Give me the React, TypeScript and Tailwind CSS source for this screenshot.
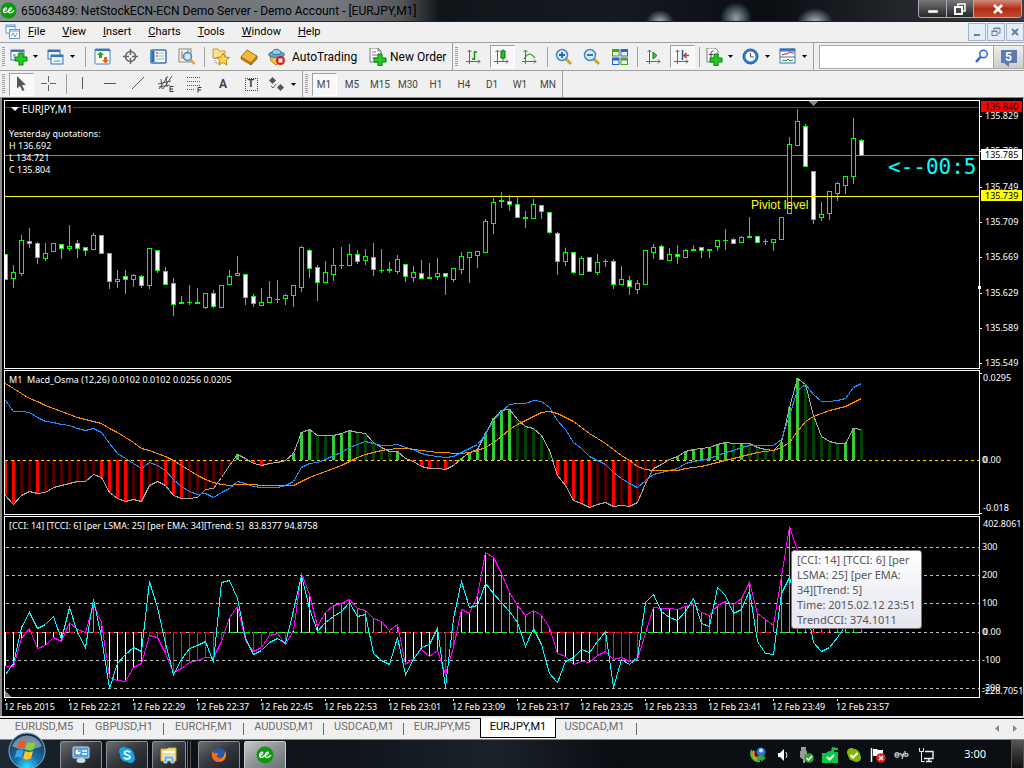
import React from 'react';
import { clsx } from 'clsx';

const STEP = 8;
const barX = (i: number) => 5 + i * STEP;

// Candles: wick top, body top, body bottom, wick bottom, 1 = bearish (filled)
const candles: number[][] = [
  [254, 254, 279, 279, 1], [265, 272, 278, 287, 0], [235, 240, 273, 275, 0], [228, 241, 243, 247, 1],
  [242, 243, 257, 263, 1], [243, 253, 258, 260, 0], [243, 243, 251, 251, 0], [244, 244, 248, 258, 1],
  [225, 246, 248, 250, 0], [240, 243, 248, 257, 1], [247, 247, 250, 255, 1], [233, 235, 249, 249, 0],
  [235, 235, 253, 253, 1], [253, 253, 281, 288, 1], [270, 279, 281, 287, 0], [270, 276, 279, 293, 1],
  [274, 275, 279, 286, 0], [275, 276, 285, 287, 1], [248, 248, 285, 288, 0], [250, 250, 270, 272, 1],
  [267, 271, 284, 284, 1], [278, 283, 304, 315, 1], [296, 302, 303, 303, 0], [285, 302, 302, 304, 0],
  [288, 302, 303, 303, 0], [293, 293, 307, 308, 0], [290, 293, 306, 307, 1], [285, 285, 307, 307, 0],
  [270, 276, 284, 284, 0], [256, 273, 275, 275, 0], [274, 274, 297, 304, 1], [294, 296, 303, 306, 1],
  [288, 302, 305, 305, 0], [281, 297, 302, 302, 0], [280, 299, 299, 302, 0], [294, 295, 298, 304, 0],
  [285, 285, 295, 306, 0], [246, 247, 287, 291, 0], [249, 250, 268, 277, 1], [265, 267, 282, 300, 1],
  [261, 272, 282, 282, 0], [248, 265, 274, 280, 0], [247, 265, 265, 268, 0], [244, 254, 265, 265, 0],
  [250, 254, 261, 263, 1], [249, 256, 260, 264, 0], [243, 257, 269, 275, 1], [249, 270, 270, 272, 0],
  [262, 269, 270, 272, 0], [255, 259, 271, 273, 0], [264, 264, 276, 281, 1], [266, 272, 277, 281, 0],
  [260, 273, 278, 278, 1], [263, 277, 278, 278, 0], [258, 273, 276, 279, 0], [273, 273, 276, 294, 1],
  [268, 268, 279, 281, 0], [252, 256, 269, 273, 0], [252, 252, 257, 282, 0], [251, 251, 255, 267, 0],
  [219, 221, 252, 252, 0], [198, 202, 223, 233, 0], [192, 200, 201, 207, 0], [195, 201, 204, 210, 1],
  [196, 204, 217, 217, 1], [211, 217, 218, 227, 0], [199, 204, 218, 218, 0], [205, 205, 211, 218, 1],
  [212, 212, 232, 233, 1], [232, 233, 261, 274, 1], [248, 252, 261, 265, 0], [252, 252, 272, 273, 1],
  [256, 258, 274, 274, 0], [257, 257, 271, 271, 1], [254, 262, 272, 274, 0], [259, 261, 261, 266, 0],
  [259, 261, 284, 288, 1], [266, 279, 284, 284, 0], [276, 280, 286, 294, 1], [280, 283, 289, 293, 0],
  [250, 250, 284, 284, 0], [244, 247, 252, 258, 0], [245, 246, 259, 259, 1], [248, 254, 260, 260, 0],
  [245, 254, 256, 263, 1], [249, 250, 257, 257, 0], [245, 249, 250, 250, 0], [247, 247, 250, 257, 1],
  [249, 249, 250, 257, 0], [240, 240, 246, 250, 0], [229, 240, 240, 249, 0], [238, 239, 243, 243, 1],
  [236, 237, 242, 242, 0], [217, 236, 237, 237, 0], [236, 236, 242, 242, 1], [239, 241, 241, 244, 0],
  [239, 239, 242, 250, 0], [217, 217, 239, 239, 0], [137, 144, 213, 213, 0], [109, 121, 145, 145, 0],
  [124, 126, 166, 166, 1], [171, 171, 219, 223, 1], [202, 214, 217, 220, 0], [191, 191, 213, 219, 0],
  [182, 183, 193, 200, 0], [176, 176, 185, 193, 0], [118, 138, 176, 183, 0], [139, 140, 155, 155, 1],
];

// Indicator samples are kept at three units per pixel, counted from y = 370
const sampleY = (v: number) => Math.round(370 + v / 3);

const osma = [
  376, 403, 375, 364, 370, 366, 352, 346, 339, 334, 334, 313, 322, 366, 384, 394, 388, 394, 344, 334,
  344, 376, 385, 385, 380, 358, 354, 322, 284, 253, 264, 280, 286, 280, 277, 270, 248, 186, 178, 196,
  196, 194, 190, 181, 186, 190, 215, 232, 243, 242, 265, 274, 289, 295, 294, 298, 286, 265, 247, 236,
  190, 145, 121, 118, 146, 169, 175, 196, 240, 315, 346, 390, 398, 412, 403, 395, 409, 406, 407, 397,
  340, 295, 283, 268, 259, 243, 238, 235, 232, 222, 217, 220, 219, 220, 230, 238, 240, 215, 111, 25,
  42, 136, 198, 213, 220, 219, 174, 178,
];

const macd = [
  90, 124, 124, 127, 142, 154, 157, 163, 166, 175, 181, 174, 186, 220, 248, 265, 278, 295, 276, 284,
  299, 327, 347, 363, 373, 370, 380, 367, 353, 333, 340, 348, 352, 352, 352, 346, 334, 292, 278, 277,
  268, 256, 247, 230, 222, 214, 218, 224, 226, 223, 232, 238, 248, 254, 258, 262, 259, 247, 234, 222,
  192, 150, 122, 103, 100, 100, 91, 92, 112, 150, 177, 215, 234, 259, 270, 282, 307, 323, 340, 352,
  331, 313, 307, 300, 294, 280, 274, 270, 264, 254, 245, 240, 231, 226, 226, 226, 226, 207, 135, 60,
  42, 72, 94, 94, 90, 84, 51, 40,
];

const signal = [
  40, 55, 70, 83, 94, 106, 115, 124, 133, 142, 148, 154, 160, 173, 187, 202, 217, 234, 241, 249,
  258, 271, 286, 301, 315, 327, 337, 343, 346, 343, 343, 343, 346, 346, 346, 346, 346, 334, 322, 312,
  303, 293, 285, 274, 262, 252, 246, 240, 237, 235, 235, 236, 239, 242, 245, 247, 250, 250, 247, 241,
  231, 216, 198, 178, 162, 150, 138, 127, 124, 130, 140, 153, 171, 188, 204, 220, 236, 254, 271, 289,
  298, 301, 301, 301, 299, 294, 292, 289, 283, 276, 271, 264, 259, 252, 247, 243, 241, 232, 215, 184,
  153, 138, 129, 120, 114, 107, 96, 84,
];

const cci = [
  887, 887, 805, 773, 835, 826, 800, 814, 756, 778, 787, 703, 757, 920, 931, 934, 890, 880, 795, 801,
  850, 907, 895, 875, 871, 862, 862, 812, 740, 709, 810, 844, 830, 795, 788, 823, 780, 610, 672, 767,
  725, 706, 700, 688, 714, 720, 745, 754, 781, 762, 882, 863, 838, 858, 840, 913, 830, 718, 728, 675,
  547, 560, 610, 665, 706, 734, 720, 735, 770, 850, 857, 883, 874, 877, 856, 844, 868, 860, 874, 868,
  790, 712, 715, 713, 716, 708, 702, 726, 734, 705, 694, 701, 684, 637, 729, 748, 765, 617, 468, 540,
  600, 700, 770, 770, 740, 700, 680, 700,
];

const tcci = [
  913, 880, 770, 727, 773, 763, 738, 808, 712, 785, 832, 688, 800, 953, 880, 853, 830, 843, 634, 710,
  820, 913, 868, 835, 825, 813, 876, 637, 631, 684, 803, 853, 841, 815, 805, 820, 720, 615, 715, 783,
  757, 737, 722, 695, 737, 733, 848, 871, 883, 800, 913, 868, 830, 822, 775, 952, 745, 634, 710, 705,
  640, 668, 695, 724, 755, 829, 775, 822, 908, 937, 874, 862, 838, 846, 812, 783, 952, 868, 883, 862,
  697, 673, 722, 740, 750, 723, 685, 758, 768, 652, 676, 728, 718, 660, 812, 850, 853, 668, 620, 700,
  700, 815, 842, 832, 800, 765, 745, 745,
];

// One letter per bar: white, lime, red, yellow
const cciBars =
  'wwwlwwwwlllllwwwwyrrrrrrrrrrwwrrrrrrwwwwylllllllllwwwwyrrwwwwylllllllwwwwyrrrrrrrwwwwyllllllllllllllllllllll';
const barColor: Record<string, string> = { w: '#fff', l: '#0f0', r: '#e02020', y: '#ffd700' };

const zeroSegments: [number, number, string][] = [
  [5, 220, '#f00'], [221, 372, '#0f0'], [373, 460, '#f00'], [461, 543, '#0f0'], [544, 640, '#f00'],
  [641, 750, '#0f0'], [757, 773, '#f00'], [781, 803, '#0f0'], [811, 829, '#f00'], [837, 862, '#0f0'],
];

const priceTicks: [string, number][] = [
  ['135.829', 116], ['135.789', 151], ['135.749', 187], ['135.709', 222],
  ['135.669', 257], ['135.629', 293], ['135.589', 328], ['135.549', 363],
];

const dates = [
  '2015', '22:21', '22:29', '22:37', '22:45', '22:53', '23:01',
  '23:09', '23:17', '23:25', '23:33', '23:41', '23:49', '23:57',
];

const points = (data: number[]) => data.map((v, i) => `${barX(i)},${sampleY(v)}`).join(' ');

const Line = ({ data, color }: { data: number[]; color: string }) => (
  <polyline points={points(data)} fill="none" stroke={color} strokeWidth={1} transform="translate(.5 .5)" />
);

/* ---------- Chart panels ---------- */

interface PanelProps {
  top: number;
  height: number;
  axis: React.ReactNode;
  header: React.ReactNode;
  children: React.ReactNode;
}

const Panel: React.FC<PanelProps> = ({ top, height, axis, header, children }) => (
  <section className="relative mb-px flex">
    <div className="min-w-0 flex-1 overflow-hidden border border-white">
      <svg
        width={974}
        height={height - 2}
        viewBox={`5 ${top + 1} 974 ${height - 2}`}
        className="block overflow-visible"
        shapeRendering="crispEdges"
      >
        {children}
      </svg>
    </div>
    <svg
      width={43}
      height={height}
      viewBox={`980 ${top} 43 ${height}`}
      className="block shrink-0 overflow-visible fill-white text-[9px]"
      shapeRendering="crispEdges"
    >
      {axis}
    </svg>
    <div className="absolute top-0 left-0 w-full pl-[5px]">{header}</div>
  </section>
);

const PriceTag = ({ y, fill, label }: { y: number; fill: string; label: string }) => (
  <>
    <rect x={981} y={y} width={41} height={11} fill={fill} />
    <text x={985} y={y + 9} fill="#000">{label}</text>
  </>
);

const PricePanel = () => (
  <Panel
    top={100}
    height={269}
    axis={
      <>
        {priceTicks.map(([label, y]) => (
          <React.Fragment key={label}>
            <rect x={980} y={y} width={2} height={1} />
            <text x={985} y={y + 3}>{label}</text>
          </React.Fragment>
        ))}
        <PriceTag y={101} fill="#f00" label="135.840" />
        <PriceTag y={149} fill="#fff" label="135.785" />
        <PriceTag y={190} fill="#ff0" label="135.739" />
        <rect x={978} y={286} width={3} height={3} />
      </>
    }
    header={
      <>
        <div className="flex h-[17px] items-center gap-1 pl-[2px]">
          <svg width="8" height="4" viewBox="0 0 8 4"><path d="M0 0h8L4 4z" fill="#fff" /></svg>
          <span className="-ml-px bg-black pr-px text-[10px] leading-3">EURJPY,M1</span>
        </div>
        <p className="mt-[11px] leading-3">Yesterday quotations:<br />H 136.692<br />L 134.721<br />C 135.804</p>
      </>
    }
  >
    <rect x={5} y={107} width={4000} height={1} fill="#f00" />
    <rect x={5} y={155} width={4000} height={1} fill="#778899" />
    {candles.map(([high, top, bottom, low, bearish], i) => (
      <g key={i}>
        <rect x={barX(i)} y={high} width={1} height={low - high + 1} fill="#0f0" />
        <rect x={barX(i) - 2} y={top} width={5} height={bottom - top + 1} fill="#0f0" />
        {bottom - top > 1 && (
          <rect x={barX(i) - 1} y={top + 1} width={3} height={bottom - top - 1} fill={bearish ? '#fff' : '#000'} />
        )}
      </g>
    ))}
    <rect x={5} y={196} width={4000} height={1} fill="#ff0" />
    <path d="M808 101h10l-5 5z" fill="#778899" />
    <text x={751} y={209} fill="#ff0" className="font-['Liberation_Sans',sans-serif] text-[12px]">Piviot level</text>
    <text x={888} y={174} fill="#0ff" className="font-['DejaVu_Sans_Mono',monospace] text-[21px]">{'<--00:5'}</text>
  </Panel>
);

const MacdPanel = () => (
  <Panel
    top={370}
    height={145}
    axis={
      <>
        <rect x={980} y={373} width={2} height={1} />
        <text x={983} y={381}>0.0295</text>
        <text x={982} y={463}>0</text>
        <text x={983} y={463}>0.00</text>
        <text x={983} y={511}>-0.018</text>
        <rect x={980} y={513} width={2} height={1} />
      </>
    }
    header={<p className="leading-5 whitespace-pre">{'M1  Macd_Osma (12,26) 0.0102 0.0102 0.0256 0.0205'}</p>}
  >
    {osma.map((v, i) => {
      const growing = i === 0 || (v > 271 ? v > osma[i - 1] : v < osma[i - 1]);
      const fill = v > 271 ? (growing ? '#f00' : '#500000') : growing ? '#32cd32' : '#004000';
      const y = sampleY(v);
      return <rect key={i} x={barX(i) - 1} y={Math.min(y, 460)} width={3} height={Math.abs(y - 460)} fill={fill} />;
    })}
    <line x1={5} x2={4000} y1={460.5} y2={460.5} stroke="#ffd700" strokeDasharray="3 3" />
    <Line data={osma} color="#a9a9a9" />
    <Line data={macd} color="#1e90ff" />
    <Line data={signal} color="#ff8c00" />
  </Panel>
);

const CciPanel = () => (
  <Panel
    top={516}
    height={182}
    axis={
      <>
        <text x={983} y={527}>402.8061</text>
        <text x={982} y={550}>300</text>
        <text x={982} y={578}>200</text>
        <text x={982} y={606}>100</text>
        <text x={982} y={635}>0</text>
        <text x={983} y={635}>0.00</text>
        <text x={982} y={663}>-100</text>
        <text x={982} y={691}>-200</text>
        <text x={982} y={694}>-228.7051</text>
      </>
    }
    header={
      <p className="leading-5 whitespace-pre">
        {'[CCI: 14] [TCCI: 6] [per LSMA: 25] [per EMA: 34][Trend: 5]  83.8377 94.8758'}
      </p>
    }
  >
    {[547, 575, 603, 632, 660, 688].map((y) => (
      <line key={y} x1={6} x2={4000} y1={y + 0.5} y2={y + 0.5} stroke="#c0c0c0" strokeDasharray="3 3" />
    ))}
    {zeroSegments.map(([x1, x2, color]) => (
      <line key={x1} x1={x1} x2={x2} y1={632.5} y2={632.5} stroke={color} strokeDasharray="5 3" />
    ))}
    {cci.map((v, i) => {
      const y = sampleY(v);
      return (
        <rect key={i} x={barX(i)} y={Math.min(y, 632)} width={1} height={Math.abs(y - 632)} fill={barColor[cciBars[i]]} />
      );
    })}
    <Line data={cci} color="#f0f" />
    <Line data={tcci} color="#0ff" />
    <path d="M5 691v6h6z" fill="#778899" />
  </Panel>
);

/* ---------- Toolbar icons ---------- */

const Plus = () => <path d="M8 7h4v4h4v4h-4v4H8v-4H4v-4h4z" fill="#1fd01f" stroke="#067a06" />;
const axes = <path d="M4.500 2v14M1 13.500h14M2.500 4l2-2 2 2M13 11.500l2 2-2 2" fill="none" stroke="#666" />;

const icons: Record<string, React.ReactNode> = {
  newChart: <><rect x="1" y="2" width="13" height="10" fill="#fff" stroke="#3a75b5" /><path d="M1 3h13" stroke="#3a75b5" strokeWidth="2" /><path d="M4 6v4M3 7h3M8 5v3" stroke="#5b93cc" /><g transform="translate(1 -2)"><Plus /></g></>,
  profiles: <><rect x="1" y="2" width="12" height="9" fill="#e9f2fb" stroke="#3a75b5" /><path d="M1 3h12" stroke="#3a75b5" strokeWidth="2" /><rect x="4" y="7" width="12" height="9" fill="#e9f2fb" stroke="#3a75b5" /><path d="M4 8h12" stroke="#3a75b5" strokeWidth="2" /><path d="M7 13h6" stroke="#5b93cc" /></>,
  market: <><rect x="1" y="1" width="15" height="15" rx="1" fill="#fff" stroke="#4583c4" /><path d="M1 2h15" stroke="#3a75b5" strokeWidth="2" /><path d="M6.500 3.500l3.500 3.500H8v3H5V7H3z" fill="#2a2" /><path d="M11.500 15.500l3.500-3.500h-2V9h-3v3H8z" fill="#e2621b" /></>,
  target: <g fill="none" stroke="#666" strokeWidth="1.500"><circle cx="8.500" cy="8.500" r="5" /><path d="M8.500 1v6M8.500 10v6M1 8.500h6M10 8.500h6" /></g>,
  navigator: <><rect x="1" y="2" width="15" height="13" rx="1" fill="#f4f9ff" stroke="#3a75b5" strokeWidth="1.500" /><path d="M3 3v11" stroke="#2f6fb8" strokeWidth="3" /><path d="M6 5h2M6 8h2" stroke="#c00" /><path d="M9 5h5M9 8h5M6 11h8" stroke="#9bb" /></>,
  tester: <><rect x="1" y="1" width="12" height="13" fill="#f3f1e6" stroke="#8a8a7a" /><path d="M4 3v8M7 5v6M10 2v5" stroke="#777" /><circle cx="9.500" cy="8.500" r="4" fill="#cfe6fa" fillOpacity=".85" stroke="#4a88c7" strokeWidth="1.500" /><path d="M12.500 11.500l4 4.500" stroke="#d8a63a" strokeWidth="2.500" /></>,
  favorites: <><path d="M1 1h5l1 2h6v7H1z" fill="#fbe487" stroke="#c59a26" /><path d="M3 10v5h4" fill="none" stroke="#888" strokeDasharray="1 1" /><path d="M11 5l2 4 4.500.500-3.500 3 1 4.500-4-2.500L7 17l1-4.500-3.500-3L9 9z" fill="#ffd84a" stroke="#b98712" /></>,
  book: <><path d="M1 9l6-7 10 6-6 7z" fill="#f0b93a" stroke="#a97410" /><path d="M1 9v2l10 6v-2zM11 15l6-7v3l-6 6z" fill="#c98b16" stroke="#8f5f0b" strokeWidth=".7" /></>,
  auto: <><path d="M2 8h13l-2 6-5 3-5-4z" fill="#f2c14e" stroke="#b4801b" /><ellipse cx="8.500" cy="6.500" rx="8" ry="3" fill="#5aa6d6" stroke="#2f78a8" /><path d="M4 5c0-5 9-5 9 0 0 2-9 2-9 0z" fill="#8fcbec" stroke="#2f78a8" /><circle cx="12.500" cy="12.500" r="4.500" fill="#d91c0c" /><rect x="10.500" y="10.500" width="4" height="4" fill="#fff" /></>,
  order: <><path d="M1 0h8l3 3v11H1z" fill="#fff" stroke="#777" /><path d="M9 0v3h3M3 4h4M3 7h7M3 10h5" fill="none" stroke="#777" /><g transform="translate(1 -1)"><Plus /></g></>,
  bars: <>{axes}<path d="M9.500 3v9M9.500 4H12M7 11h2.500" stroke="#139113" strokeWidth="1.500" fill="none" /></>,
  candles: <>{axes}<path d="M10 1v12" stroke="#139113" /><rect x="8" y="3" width="4" height="7" fill="#25c425" stroke="#0a6e0a" /></>,
  line: <>{axes}<path d="M3 11c4-6 6-7 11-1" stroke="#2a9d2a" fill="none" strokeWidth="1.200" /></>,
  zoomIn: <><path d="M11 11l5 5" stroke="#d5a230" strokeWidth="3" /><circle cx="7" cy="7" r="5.500" fill="#d8edfb" stroke="#4488c6" strokeWidth="1.500" /><path d="M7 4v6M4 7h6" stroke="#2766a8" strokeWidth="1.800" /></>,
  zoomOut: <><path d="M11 11l5 5" stroke="#d5a230" strokeWidth="3" /><circle cx="7" cy="7" r="5.500" fill="#d8edfb" stroke="#4488c6" strokeWidth="1.500" /><path d="M4 7h6" stroke="#2766a8" strokeWidth="1.800" /></>,
  tile: <><path d="M1 1h7.500v7.500H1zM9.500 9.500H17V17H9.500z" fill="#4da319" /><path d="M9.500 1H17v7.500H9.500zM1 9.500h7.500V17H1z" fill="#2c62cf" /><path d="M2 4h5.500v3.500H2zM10.500 4H16v3.500h-5.500zM2 12.500h5.500V16H2zM10.500 12.500H16V16h-5.500z" fill="#e6f0fa" /></>,
  scroll: <>{axes}<path d="M8 4v7l4-3.500z" fill="#3fbf3f" stroke="#138013" /></>,
  shift: <>{axes}<path d="M9.500 2v10" stroke="#1d5e9c" strokeWidth="1.500" /><path d="M16 7.500h-5M13.500 5L11 7.500l2.500 2.500" stroke="#c63a12" fill="none" strokeWidth="1.500" /></>,
  indicators: <><path d="M2 0h8l3 3v11H2z" fill="#fff" stroke="#777" /><path d="M8.500 3C6 3 6 4 6 6v5M4 6.500h4" fill="none" stroke="#444" /><g transform="translate(1 -1)"><Plus /></g></>,
  periods: <><circle cx="8.500" cy="8.500" r="7.500" fill="#2a7fd4" stroke="#1a5a9f" /><circle cx="8.500" cy="8.500" r="5" fill="#fff" /><path d="M8.500 5v4H12" fill="none" stroke="#555" /></>,
  template: <><rect x="1" y="1" width="15" height="14" fill="#fff" stroke="#3a75b5" /><path d="M1 2h15" stroke="#3a75b5" strokeWidth="3" /><path d="M1 9h15" stroke="#3a75b5" /><path d="M3 7l3-1 2 0 3-2 2 1h2" stroke="#b02020" fill="none" /><path d="M3 13l2-1 2 1 2-2 2 2 3-1" stroke="#208a20" fill="none" /></>,
  pointer: <path d="M5 1v12.500l3-2.500 2.500 5 2-1-2.500-5h4z" fill="#555" />,
  cross: <path d="M8.500 1v6M8.500 10v6M1 8.500h6M10 8.500h6" stroke="#666" />,
  vline: <path d="M8.500 2v12" stroke="#555" />,
  hline: <path d="M2 8.500h12" stroke="#555" />,
  trend: <path d="M2 14L14 2" stroke="#555" />,
  channel: <><path d="M1 14L10 1M5 14l9-13M0 9l13-3M1 12l11-2M3 4l1 10M8 2l1 10" stroke="#555" fill="none" /><path d="M15.500 11.500h-3.500v5h3.500M12 14h3" stroke="#333" fill="none" /></>,
  fibo: <><path d="M1 2.500h14M1 6.500h14M1 10.500h14M1 14.500h8" stroke="#555" strokeDasharray="1 1" /><path d="M15.500 12.500h-3.500v5M12 15h3" stroke="#333" fill="none" /></>,
  arrows: <><path d="M4.500 2L8 5.500 4.500 9 1 5.500zM12.500 9l3.500 3.500-3.500 3.500L9 12.500z" fill="#555" /><path d="M3 11l2 2 3-4" stroke="#555" fill="none" /></>,
};

const Icon = ({ name }: { name: string }) => (
  <svg width="18" height="18" viewBox="0 0 18 18" className="shrink-0">{icons[name]}</svg>
);

const pressed = 'border border-[#a0a0a0] border-r-white border-b-white bg-[#f8f8f8]';

const Tool = ({ name, active, children }: { name: string; active?: boolean; children?: React.ReactNode }) => (
  <button aria-label={name} className="flex h-full w-7 shrink-0 items-center justify-center">
    <span className={clsx('flex h-[23px] w-[25px] items-center justify-center', active && pressed)}>
      {children ?? <Icon name={name} />}
    </span>
  </button>
);

const DropTool = ({ name }: { name: string }) => (
  <button aria-label={name} className="flex h-full w-[37px] shrink-0 items-center pl-[3px]">
    <Icon name={name} />
    <svg width="5" height="3" viewBox="0 0 5 3" className="ml-[5px]"><path d="M0 0h5L2.500 3z" /></svg>
  </button>
);

const Handle = () => (
  <span className="mx-[2px] h-5 w-[3px] shrink-0 bg-[repeating-linear-gradient(#a0a0a0_0_1px,#f0f0f0_1px_2px)]" />
);

const Sep = ({ wide }: { wide?: boolean }) => (
  <span className={clsx('flex h-5 shrink-0 justify-center', wide ? 'w-2' : 'w-1.5')}>
    <i className="w-px bg-[#a0a0a0]" />
  </span>
);

const group = 'flex h-full items-center border-r border-[#a0a0a0]';

const EeLogo = ({ size }: { size: number }) => (
  <svg width={size} height={size} viewBox="0 0 18 18">
    <circle cx="9" cy="9" r="8.500" fill="#0b9a0b" />
    <path
      d="M3 9.500C6 9.300 7.800 6.300 6.200 6.100 4.500 6 3.300 8.500 3.800 10.300c.6 1.800 3.200 1.200 4.700-.8C11.500 9.300 13.300 6.300 11.700 6.100 10 6 8.800 8.500 9.300 10.300c.6 2 3.700 1.200 5.700-1.300"
      fill="none"
      stroke="#fff"
      strokeWidth="1.300"
    />
  </svg>
);

/* ---------- Window chrome ---------- */

const TitleBar = () => (
  <header className="flex h-[22px] items-start justify-between border-b border-[#222] bg-[radial-gradient(14px_12px_at_660px_22px,#9fb4c0,transparent),radial-gradient(16px_16px_at_736px_18px,#8ea3a6,transparent),radial-gradient(18px_14px_at_815px_22px,#a3bccb,transparent),linear-gradient(90deg,#8b8f93_0,#6f7377_150px,#777b7f_330px,#54585b_400px,#10151a_440px,#151a20_60%,#0a0d12_75%,#3a3c40_100%)]">
    <div className="flex h-[21px] items-center gap-1">
      <EeLogo size={17} />
      <h1 className="text-[12px] whitespace-nowrap text-black">
        65063489: NetStockECN-ECN Demo Server - Demo Account - [EURJPY,M1]
      </h1>
    </div>
    <div className="mr-[2px] flex h-[18px] overflow-hidden rounded-b border border-t-0 border-[#aab] text-white">
      <button aria-label="Minimize" className="flex w-7 items-center justify-center border-r border-[#aab] bg-linear-to-b from-[#777] to-[#26282b]">
        <svg width="12" height="12" viewBox="0 0 12 12"><rect x="1" y="7" width="10" height="3" fill="#fff" stroke="#555" strokeWidth=".5" /></svg>
      </button>
      <button aria-label="Restore" className="flex w-[27px] items-center justify-center border-r border-[#aab] bg-linear-to-b from-[#777] to-[#26282b]">
        <svg width="12" height="12" viewBox="0 0 12 12" fill="none" stroke="#fff" strokeWidth="1.500"><path d="M4 3V1h7v7H9" /><rect x="1" y="4" width="7" height="7" strokeWidth="2" /></svg>
      </button>
      <button aria-label="Close" className="flex w-[47px] items-center justify-center bg-linear-to-b from-[#d08a7c] via-[#b32b12] to-[#c2482e]">
        <svg width="12" height="10" viewBox="0 0 12 10"><path d="M2 1l8 8M10 1L2 9" stroke="#fff" strokeWidth="2.600" /></svg>
      </button>
    </div>
  </header>
);

const mdiButton = 'flex size-[18px] items-center justify-center border border-[#a3b4c6] bg-[#e3edf7]';

const MenuBar = () => (
  <nav className="flex h-[21px] items-center border-b border-[#a0a0a0] pl-[5px]">
    <svg width="16" height="16" viewBox="0 0 16 16" fill="#fff" stroke="#5f9ad6">
      <rect x="1" y="1" width="9" height="8" /><path d="M1 2.500h9" /><rect x="4.500" y="5.500" width="10" height="9" /><path d="M4.500 7h10M6 12l2-3 2 4 2-4" />
    </svg>
    <ul className="ml-[7px] flex gap-[17px] text-[11px]">
      {['File', 'View', 'Insert', 'Charts', 'Tools', 'Window', 'Help'].map((item) => (
        <li key={item}>
          <button><u>{item[0]}</u>{item.slice(1)}</button>
        </li>
      ))}
    </ul>
    <div className="ml-auto flex gap-px">
      <button aria-label="Minimize chart" className={mdiButton}><i className="mt-1.5 h-[2px] w-1.5 bg-[#6b8096]" /></button>
      <button aria-label="Restore chart" className={mdiButton}>
        <svg width="10" height="10" viewBox="0 0 10 10" fill="none" stroke="#6b8096"><path d="M3 3V1h6v5H7M3 1.500h6" /><rect x="1" y="4" width="5" height="4.500" /><path d="M1 4.500h5" /></svg>
      </button>
      <button aria-label="Close chart" className={mdiButton}>
        <svg width="8" height="8" viewBox="0 0 8 8"><path d="M1 1l6 6M7 1L1 7" stroke="#6b8096" strokeWidth="2" /></svg>
      </button>
    </div>
  </nav>
);

const MainToolbar = () => (
  <div className="flex h-[28px] items-center border-b border-[#a0a0a0] text-[12px]">
    <div className={group}>
      <Handle />
      <DropTool name="newChart" />
      <DropTool name="profiles" />
      <Sep wide />
      <Tool name="market" /><Tool name="target" /><Tool name="navigator" /><Tool name="tester" />
      <Sep />
      <Tool name="favorites" /><Tool name="book" />
      <button className="flex w-[100px] items-center gap-[6px] pl-[5px] whitespace-nowrap"><Icon name="auto" />AutoTrading</button>
      <button className="flex w-[89px] items-center gap-[3px] pl-[6px] whitespace-nowrap"><Icon name="order" />New Order</button>
    </div>
    <div className={group}>
      <Handle />
      <Tool name="bars" /><Tool name="candles" active /><Tool name="line" />
      <Sep />
      <Tool name="zoomIn" /><Tool name="zoomOut" /><Tool name="tile" />
      <Sep />
      <Tool name="scroll" /><Tool name="shift" active />
      <Sep />
      <DropTool name="indicators" /><DropTool name="periods" /><DropTool name="template" />
    </div>
    <div className="ml-[5px] flex h-6 min-w-0 flex-1 border border-[#a9a9a9]">
      <label className="flex min-w-0 flex-1 items-center bg-white">
        <input aria-label="Search" className="min-w-0 flex-1 px-1 outline-none" />
        <svg width="15" height="15" viewBox="0 0 15 15" className="mr-1"><circle cx="9.500" cy="5" r="3.800" fill="#eef5ff" stroke="#3a6bd0" strokeWidth="1.500" /><path d="M6.500 8L2 13" stroke="#2e5fc4" strokeWidth="2.500" /></svg>
      </label>
      <button aria-label="Messages" className="flex w-[30px] items-center justify-center border-l border-[#a9a9a9] bg-linear-to-b from-[#eee] to-[#ccc]">
        <span className="relative flex h-[13px] w-4 items-center justify-center bg-[#5d7bb0] text-[12px] font-bold text-white">
          5
          <svg width="5" height="4" viewBox="0 0 5 4" className="absolute top-full left-[3px]"><path d="M0 0h5v4z" fill="#5d7bb0" /></svg>
        </span>
      </button>
    </div>
  </div>
);

const DrawToolbar = () => (
  <div className="flex h-[26px] items-center text-[10px] text-[#444]">
    <div className={group}>
      <Handle />
      <Tool name="pointer" active /><Tool name="cross" />
      <Sep />
      {['vline', 'hline', 'trend', 'channel', 'fibo'].map((n) => <Tool key={n} name={n} />)}
      <Tool name="text"><b className="text-[12px]">A</b></Tool>
      <Tool name="label"><b className="flex size-[13px] items-center justify-center border border-dotted border-[#444] text-[11px]">T</b></Tool>
      <DropTool name="arrows" />
    </div>
    <div className={group}>
      <Handle />
      {['M1', 'M5', 'M15', 'M30', 'H1', 'H4', 'D1', 'W1', 'MN'].map((tf) => (
        <Tool key={tf} name={tf} active={tf === 'M1'}>{tf}</Tool>
      ))}
    </div>
  </div>
);

const Tooltip = () => (
  <div
    role="tooltip"
    className="absolute top-[452px] left-[791px] w-[131px] rounded-[3px] border border-[#767676] bg-linear-to-b from-white to-[#e4e5f0] px-[5px] py-px font-['Noto_Sans',sans-serif] text-[11px] leading-[15px] whitespace-nowrap text-[#575757]"
  >
    [CCI: 14] [TCCI: 6] [per<br />LSMA: 25] [per EMA:<br />34][Trend: 5]<br />Time: 2015.02.12 23:51<br />TrendCCI: 374.1011
  </div>
);

const Charts = () => (
  <main className="relative border-t border-[#8a8a8a] bg-black">
    <div className="border-r border-l-2 border-r-[#ddd] border-l-[#8a8a8a] pt-[2px] pl-[2px] font-['Noto_Sans',sans-serif] text-[9px] text-white">
      <PricePanel />
      <MacdPanel />
      <CciPanel />
      <div className="flex h-[17px] overflow-hidden">
        {dates.map((d) => (
          <span key={d} className="relative w-16 shrink-0 pt-px leading-[14px] whitespace-nowrap">
            <i className="absolute -top-px left-px h-[3px] w-px bg-white" />
            12 Feb {d}
          </span>
        ))}
      </div>
    </div>
    <Tooltip />
  </main>
);

const ChartTabs = () => (
  <div className="flex h-[23px] items-start border-t-2 border-[#e8e8e8] bg-[#f0f0f0] text-[11px] text-[#6d6d6d]">
    <div className="flex h-5 flex-1 items-center border-t border-black pl-1">
      {['EURUSD,M5', 'GBPUSD,H1', 'EURCHF,M1', 'AUDUSD,M1', 'USDCAD,M1', 'EURJPY,M5'].map((t, i) => (
        <button key={t} className={clsx('relative h-full pb-[2px] text-center', i === 5 ? 'w-[76px]' : 'w-20')}>
          {t}
          {i < 5 && <i className="absolute top-1 right-0 h-3 w-px bg-[#6d6d6d]" />}
        </button>
      ))}
      <button className="-mt-px h-5 w-[76px] border-x border-b border-black bg-white text-black">EURJPY,M1</button>
      <button className="relative h-full w-[81px] pr-1 pb-[2px] text-center">
        USDCAD,M1
        <i className="absolute top-1 right-0 h-3 w-px bg-[#6d6d6d]" />
      </button>
      <div className="mr-[7px] ml-auto flex gap-3">
        <svg width="5" height="7" viewBox="0 0 5 7"><path d="M4 0v7L0 3.500z" fill="#888" /></svg>
        <svg width="5" height="7" viewBox="0 0 5 7"><path d="M1 0v7l4-3.500z" fill="#888" /></svg>
      </div>
    </div>
  </div>
);

const taskButton = 'flex h-7 items-center justify-center rounded-[2px] border border-[#8b9096] bg-linear-to-br from-[#6a6e73] via-[#34383d] to-[#1d2126]';

const Taskbar = () => (
  <footer className="relative flex h-[30px] items-center border-t border-[#7d868c] bg-[linear-gradient(90deg,#1b2a33_0,#0b1016_140px,#10161c_35%,#1b2229_48%,#0a0e13_60%,#0b0f14_100%)] pl-[60px]">
    <button aria-label="Start" className="absolute -top-2 left-2">
      <svg width="38" height="38" viewBox="0 0 38 38">
        <defs>
          <radialGradient id="orb" cx=".5" cy=".95" r=".9">
            <stop offset="0" stopColor="#2fe0ff" /><stop offset=".4" stopColor="#1a6fa8" /><stop offset="1" stopColor="#15344f" />
          </radialGradient>
        </defs>
        <circle cx="19" cy="19" r="18" fill="url(#orb)" stroke="#7fb2cc" />
        <path d="M4 14a16 16 0 0 1 30 0c-8 4-22 5-30 0z" fill="#fff" opacity=".4" />
        <path d="M11 10c3-2 5-2 7-.500L16 17c-2-1.500-4-1.500-7 0z" fill="#ee5a24" />
        <path d="M19.500 10c2 1.500 5 1.500 8 0l-2 7.500c-3 1.500-5.500 1.500-8 0z" fill="#8fce2f" />
        <path d="M8.500 18.500c3-1.500 5-1.500 7 0l-2 7.500c-2-1.500-4-1.500-7 0z" fill="#3aa0e8" />
        <path d="M17 19c2.500 1.500 5 1.500 8 0l-2 7.500c-3 1.500-5.500 1.500-8 0z" fill="#fdc62c" />
      </svg>
    </button>
    <button aria-label="Control Panel" className={clsx(taskButton, 'w-[42px]')}>
      <svg width="18" height="18" viewBox="0 0 18 18"><rect x="1" y="1" width="16" height="11" rx="1" fill="#4da0e0" stroke="#bfe0f8" /><circle cx="6" cy="6" r="2.500" fill="#fff" /><path d="M6 6V3.500A2.500 2.500 0 0 1 8.500 6z" fill="#f08a1c" /><path d="M10 5h5M10 8h5" stroke="#fff" strokeWidth="1.500" /><ellipse cx="9" cy="14.500" rx="4.500" ry="2.500" fill="#d5dade" /></svg>
    </button>
    <button aria-label="Skype" className={clsx(taskButton, 'ml-1 w-[42px]')}>
      <svg width="18" height="18" viewBox="0 0 18 18"><circle cx="5.500" cy="5.500" r="4.500" fill="#12a5ea" /><circle cx="12.500" cy="12.500" r="4.500" fill="#12a5ea" /><circle cx="9" cy="9" r="7" fill="#12a5ea" /><path d="M12 6.500C11 4.500 6.500 4.500 6.500 7S12 8.500 12 11s-5 2.500-6 .3" fill="none" stroke="#fff" strokeWidth="1.800" /></svg>
    </button>
    <button aria-label="Explorer" className={clsx(taskButton, 'ml-1 w-[34px]')}>
      <svg width="18" height="18" viewBox="0 0 18 18"><path d="M1 3h6l1-1h8v13H1z" fill="#f4dc8a" stroke="#c9a63d" /><path d="M3 6h12" stroke="#fff" strokeWidth="2" /><path d="M4 17v-5q0-2 2-2h6q2 0 2 2v5h-3v-4H7v4z" fill="#6cb8ea" stroke="#e8f5ff" strokeWidth=".7" /></svg>
    </button>
    <span className="ml-px flex h-7 gap-[2px]"><i className="w-px bg-[#666]" /><i className="w-px bg-[#555]" /></span>
    <button aria-label="Firefox" className={clsx(taskButton, 'ml-[7px] w-[42px]')}>
      <svg width="16" height="16" viewBox="0 0 16 16"><circle cx="8" cy="8" r="7" fill="#2a56a4" /><path d="M2 3c-3 6 0 12 6 12s9-6 6-11c0 5-3 8-6 7-4-1-2-4 0-4-2-2-4 0-5-1-1-.700-1-2-1-3z" fill="#ee6d12" /><path d="M14 4c1 6-2 10-6 10 4-1 6-4 6-10z" fill="#fdc52c" /></svg>
    </button>
    <button aria-label="Terminal" className="ml-1 flex h-7 w-[42px] items-center justify-center rounded-[2px] border border-[#ccc] bg-linear-to-br from-[#c5c7c9] via-[#909396] to-[#6d7073]">
      <EeLogo size={18} />
    </button>
    <div className="ml-auto flex h-full items-center gap-[8px]">
      <svg width="16" height="16" viewBox="0 0 16 16" fill="none"><path d="M2 3c-3 6 2 12 8 11" stroke="#3fb93f" strokeWidth="2" /><path d="M4 4c-3 5 1 9 6 8" stroke="#f5d21c" strokeWidth="1.500" /><path d="M5 4c-2 5 1 7 5 6" stroke="#e2402a" strokeWidth="1.500" /><circle cx="11" cy="5" r="4.500" fill="#2d76d2" /><circle cx="11" cy="3.500" r="2" fill="#cfe6ff" /><path d="M7 9h4V7l5 4-5 4v-2H7z" fill="#2fa52f" /></svg>
      <svg width="16" height="16" viewBox="0 0 16 16"><path d="M4 6h2l4-4v12l-4-4H4z" fill="#fff" /><path d="M12 5q2 3 0 6" fill="none" stroke="#ddd" /></svg>
      <svg width="16" height="16" viewBox="0 0 16 16"><path d="M3 0h5v4h1v6l-2 2H4l-2-2V4h1zM5 12v4h2v-4z" fill="#999" /><circle cx="11" cy="11" r="4.800" fill="#2fa52f" /><path d="M8.500 11l2 2 3.500-4" stroke="#fff" strokeWidth="1.500" fill="none" /></svg>
      <svg width="16" height="16" viewBox="0 0 16 16"><path d="M0 6h4l3-2h2l1-4 6 1v2h-4v2h4v11H0z" fill="#0fc24a" /><path d="M5 10l2.500 2.500L12 8" stroke="#fff" strokeWidth="2" fill="none" /></svg>
      <svg width="16" height="16" viewBox="0 0 16 16"><circle cx="5.500" cy="5.500" r="4.500" fill="#7fba00" /><circle cx="10.500" cy="10.500" r="4.500" fill="#7fba00" /><circle cx="8" cy="8" r="6" fill="#7fba00" /><path d="M4.500 8l2.500 2.500L11.500 6" stroke="#fff" strokeWidth="2" fill="none" /></svg>
      <svg width="16" height="16" viewBox="0 0 16 16"><path d="M1.500 1v14" stroke="#fff" strokeWidth="1.500" /><path d="M3 2h4l1 1h5v7H8L7 9H3z" fill="#fff" /><circle cx="11" cy="11" r="4.800" fill="#d22" /><path d="M9 9l4 4M13 9l-4 4" stroke="#fff" strokeWidth="1.500" /></svg>
      <svg width="16" height="16" viewBox="0 0 16 16" fill="none" stroke="#bbb" strokeWidth="1.400"><path d="M1 8h4c0-3-4-3-4 0s3 3 4 1M6 6l2 3 2-3-2 6" /><path d="M11 4v5c4 2 4-4 0-2" /></svg>
      <svg width="16" height="16" viewBox="0 0 16 16" fill="none" stroke="#eee"><path d="M7 4.500h8v7H6M8 14.500h6M11 12v2" strokeWidth="1.400" /><path d="M1.500 1v3.500h4V1M3.500 5v9.500h3" /></svg>
      <time className="ml-[22px] font-['Noto_Sans',sans-serif] text-[11px] text-white">3:00</time>
      <button aria-label="Show desktop" className="ml-[17px] h-full w-[13px] border border-[#555] bg-linear-to-b from-[#555] to-[#111]" />
    </div>
  </footer>
);

export default function App() {
  return (
    <div className="overflow-hidden bg-[#f0f0f0] font-['Roboto',sans-serif] text-black">
      <TitleBar />
      <MenuBar />
      <MainToolbar />
      <DrawToolbar />
      <Charts />
      <ChartTabs />
      <Taskbar />
    </div>
  );
}
